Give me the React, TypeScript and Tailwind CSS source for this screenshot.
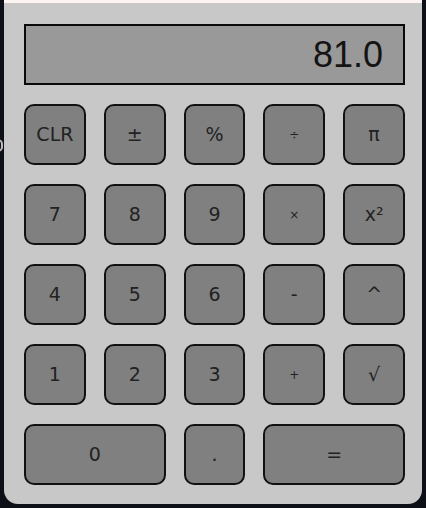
import React from "react";

type K = { label: string; small?: boolean };

const rows: K[][] = [
  [{ label: "CLR" }, { label: "±" }, { label: "%" }, { label: "÷", small: true }, { label: "π" }],
  [{ label: "7" }, { label: "8" }, { label: "9" }, { label: "×", small: true }, { label: "x²" }],
  [{ label: "4" }, { label: "5" }, { label: "6" }, { label: "-" }, { label: "^" }],
  [{ label: "1" }, { label: "2" }, { label: "3" }, { label: "+", small: true }, { label: "√" }],
];

function Key({ label, wide, small }: { label: string; wide?: boolean; small?: boolean }) {
  return (
    <button
      className={`${wide ? "col-span-2" : ""} h-[61px] rounded-[10px] border-2 border-[#111] bg-[#808080] text-[#222] flex items-center justify-center`}
      style={{ fontFamily: '"DejaVu Sans", sans-serif' }}
    >
      <span className={small ? "text-[12px]" : "text-[19px]"}>{label}</span>
    </button>
  );
}

export default function App() {
  return (
    <div className="relative w-[426px] h-[508px] bg-[#0d1117] overflow-hidden">
      <span className="absolute left-[-7px] top-[139px] w-[10px] h-[13px] rounded-full border-2 border-[#bdbdbd]" />
      <div className="ml-[4px] w-[418px] h-[504px] bg-[#c8c8c8] rounded-b-[14px] flex flex-col">
        <div className="h-[3px] bg-[#fbf4f1] shrink-0" />
        <div className="pl-[20px] pr-[17px] pt-[21px]">
          <div
            className="h-[61px] border-2 border-[#0a0a0a] bg-[#999999] flex items-center justify-end pr-[20px] text-[36px] text-[#141414]"
            style={{ fontFamily: '"Liberation Sans", sans-serif' }}
          >
            81.0
          </div>
          <div className="mt-[19px] grid grid-cols-5 gap-x-[18px] gap-y-[19px]">
            {rows.flat().map((k, i) => (
              <Key key={i} label={k.label} small={k.small} />
            ))}
            <Key label="0" wide />
            <Key label="." />
            <Key label="=" wide />
          </div>
        </div>
      </div>
    </div>
  );
}
